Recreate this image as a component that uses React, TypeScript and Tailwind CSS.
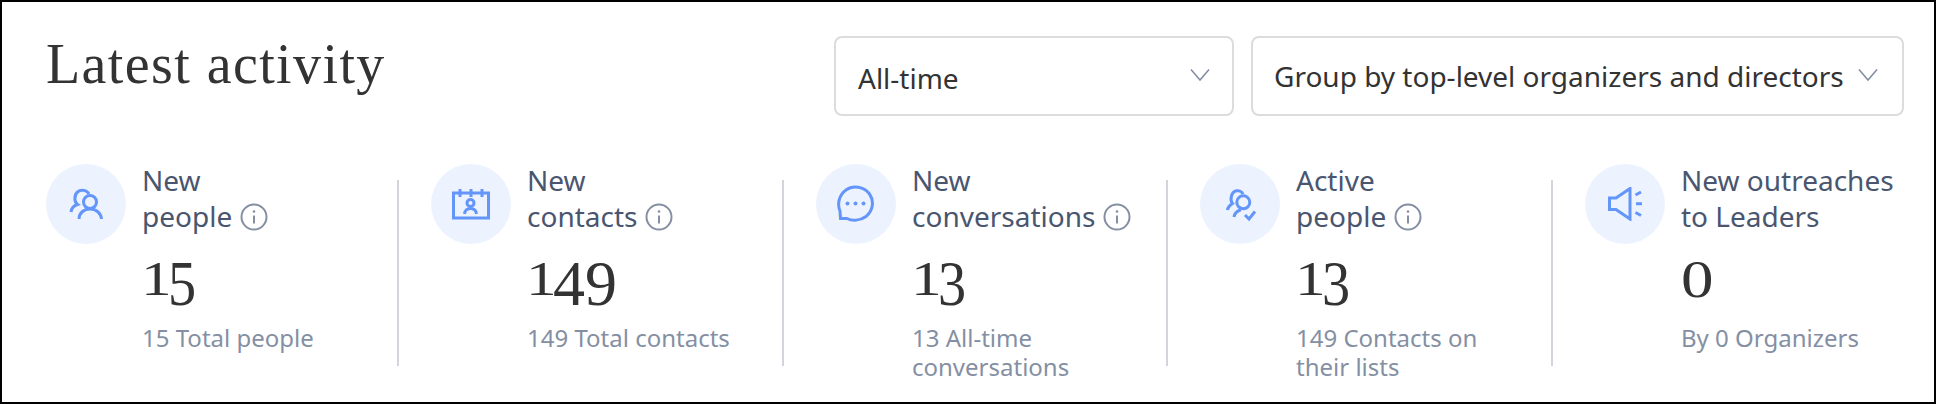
import { ReactNode } from 'react';

const Info = () => (
  <svg width="28" height="28" viewBox="0 0 28 28" fill="none" className="ml-2 mt-[2px] shrink-0 text-[#858fa3]">
    <circle cx="14" cy="14" r="12.5" stroke="currentColor" strokeWidth="2" />
    <path d="M14 12.5V20.5" stroke="currentColor" strokeWidth="2" />
    <circle cx="14" cy="8.5" r="1.3" fill="currentColor" />
  </svg>
);

const Chevron = () => (
  <svg width="20" height="14" viewBox="0 0 20 14" fill="none" className="shrink-0 text-[#858fa3]">
    <path d="M1 1.5L10 12L19 1.5" stroke="currentColor" strokeWidth="1.6" />
  </svg>
);

const stroke = { stroke: '#6496f9', strokeWidth: 3, fill: 'none' };

const PeopleIcon = () => (
  <svg width="34" height="34" viewBox="0 0 34 34">
    <path d="M2 25C2.500 21 5 18.500 8.500 17.500C5 15 5 8 8.500 5C12 2 18 3 20 7" {...stroke} />
    <circle cx="21" cy="15" r="6.500" {...stroke} />
    <path d="M10 32C10 26 15 22 21 22C27 22 32 26 32.500 32" {...stroke} />
  </svg>
);

const ContactsIcon = () => (
  <svg width="38" height="32" viewBox="0 0 38 32">
    <path d="M1.500 5H36.500V30H1.500Z" {...stroke} />
    <path d="M8 1V9M19 1V9M30 1V9" {...stroke} />
    <circle cx="18.500" cy="15" r="3.500" {...stroke} />
    <path d="M12.500 26C13 22 15.500 20.500 18.500 20.500C21.500 20.500 24 22 24.500 26" {...stroke} />
  </svg>
);

const ChatIcon = () => (
  <svg width="38" height="38" viewBox="0 0 38 38">
    <path d="M3.500 33.500L3 26C0 19 2 10 9 5C16 0 27 1.500 32.500 9C37.500 16 36 26 29 31.500C23 36 15 36 10 33.500Z" {...stroke} />
    <circle cx="10.500" cy="18.500" r="2" fill="#6496f9" />
    <circle cx="18.500" cy="18.500" r="2" fill="#6496f9" />
    <circle cx="26.500" cy="18.500" r="2" fill="#6496f9" />
  </svg>
);

const ActiveIcon = () => (
  <svg width="30" height="30" viewBox="0 0 30 30" className="overflow-visible">
    <path d="M2.300 21C3 18 5 16 7.500 14.500C5 12 5.500 3 11.500 1.800C14 1.300 17 2.500 18 5" {...stroke} />
    <circle cx="18.300" cy="13.300" r="6.500" {...stroke} />
    <path d="M9 28C9.500 24.500 12 22 16 20.800" {...stroke} />
    <path d="M20 26L24 30L30 22.500" {...stroke} />
  </svg>
);

const MegaphoneIcon = () => (
  <svg width="34" height="34" viewBox="0 0 34 34">
    <path d="M1.500 11H8L22 1.500V32L8 22.500H1.500Z" {...stroke} />
    <path d="M27.500 8L33 5M28 16.800H34M27.500 25.500L33 28.500" {...stroke} />
  </svg>
);

// reference numerals are old-style: 1 and 0 sit at x-height, the rest drop below the baseline
const Digit = ({ d }: { d: string }) => {
  if (d === '1') return <span className="-ml-[1px] mt-[2px] w-[27px] origin-left scale-x-125 text-[49px] leading-none">1</span>;
  if (d === '0') return <span className="mt-[2px] w-[36px] origin-left scale-x-125 text-[52px] leading-none">0</span>;
  if (d === '3' || d === '5') return <span className="w-[29px] origin-left scale-x-[0.88] text-[64px] leading-none">{d}</span>;
  return <span className="text-[64px] leading-none">{d}</span>;
};

const stats: { icon: ReactNode; title: [string, string]; info: boolean; value: string; sub: [string, string?] }[] = [
  { icon: <PeopleIcon />, title: ['New', 'people'], info: true, value: '15', sub: ['15 Total people'] },
  { icon: <ContactsIcon />, title: ['New', 'contacts'], info: true, value: '149', sub: ['149 Total contacts'] },
  { icon: <ChatIcon />, title: ['New', 'conversations'], info: true, value: '13', sub: ['13 All-time', 'conversations'] },
  { icon: <ActiveIcon />, title: ['Active', 'people'], info: true, value: '13', sub: ['149 Contacts on', 'their lists'] },
  { icon: <MegaphoneIcon />, title: ['New outreaches', 'to Leaders'], info: false, value: '0', sub: ['By 0 Organizers'] },
];

export default function App() {
  return (
    <div className="h-[404px] w-[1936px] overflow-hidden border-2 border-black bg-white font-['Noto_Sans',sans-serif]">
      <div className="flex h-[128px] items-start justify-between pl-[44px] pr-[30px] pt-[34px]">
        <h1 className="-mt-[2px] font-['Liberation_Serif',serif] text-[56px] leading-[60px] tracking-[1.4px] text-[#333333]">Latest activity</h1>
        <div className="flex gap-[17px]">
          <div className="flex h-[80px] w-[400px] items-center justify-between rounded-[8px] border-2 border-[#dcdcdc] pl-[22px] pr-[22px] text-[28px] text-[#333333]">
            <span className="mt-[4px]">All-time</span>
            <span className="-mt-[2px]"><Chevron /></span>
          </div>
          <div className="flex h-[80px] w-[653px] items-center justify-between rounded-[8px] border-2 border-[#dcdcdc] pl-[21px] pr-[24px] text-[28px] text-[#333333]">
            <span className="whitespace-nowrap">Group by top-level organizers and directors</span>
            <span className="-mt-[2px]"><Chevron /></span>
          </div>
        </div>
      </div>
      <div className="mt-[34px] flex pl-[44px]">
        {stats.map((s, i) => (
          <div key={s.value + i} className="flex">
            <div className={i === 2 ? 'flex w-[350px]' : 'flex w-[351px]'}>
              <div className="flex h-20 w-20 shrink-0 items-center justify-center rounded-full bg-[#edf2ff]">{s.icon}</div>
              <div className="ml-4">
                <div className="-mt-[2px] text-[28px] leading-[36px] text-[#4a5670]">
                  <div className="whitespace-nowrap">{s.title[0]}</div>
                  <div className="flex items-center whitespace-nowrap">
                    {s.title[1]}
                    {s.info && <Info />}
                  </div>
                </div>
                <div className="mt-[18px] flex h-[66px] font-['Liberation_Serif',serif] text-[#333333]">
                  {s.value.split('').map((d, j) => (
                    <Digit key={j} d={d} />
                  ))}
                </div>
                <div className="mt-[5px] text-[24px] leading-[29px] text-[#858fa3]">
                  <div className="whitespace-nowrap">{s.sub[0]}</div>
                  {s.sub[1] && <div className="whitespace-nowrap">{s.sub[1]}</div>}
                </div>
              </div>
            </div>
            {i < stats.length - 1 && <div className="mr-[32px] mt-[16px] h-[186px] w-[2px] bg-[#d2d6dc]" />}
          </div>
        ))}
      </div>
    </div>
  );
}
